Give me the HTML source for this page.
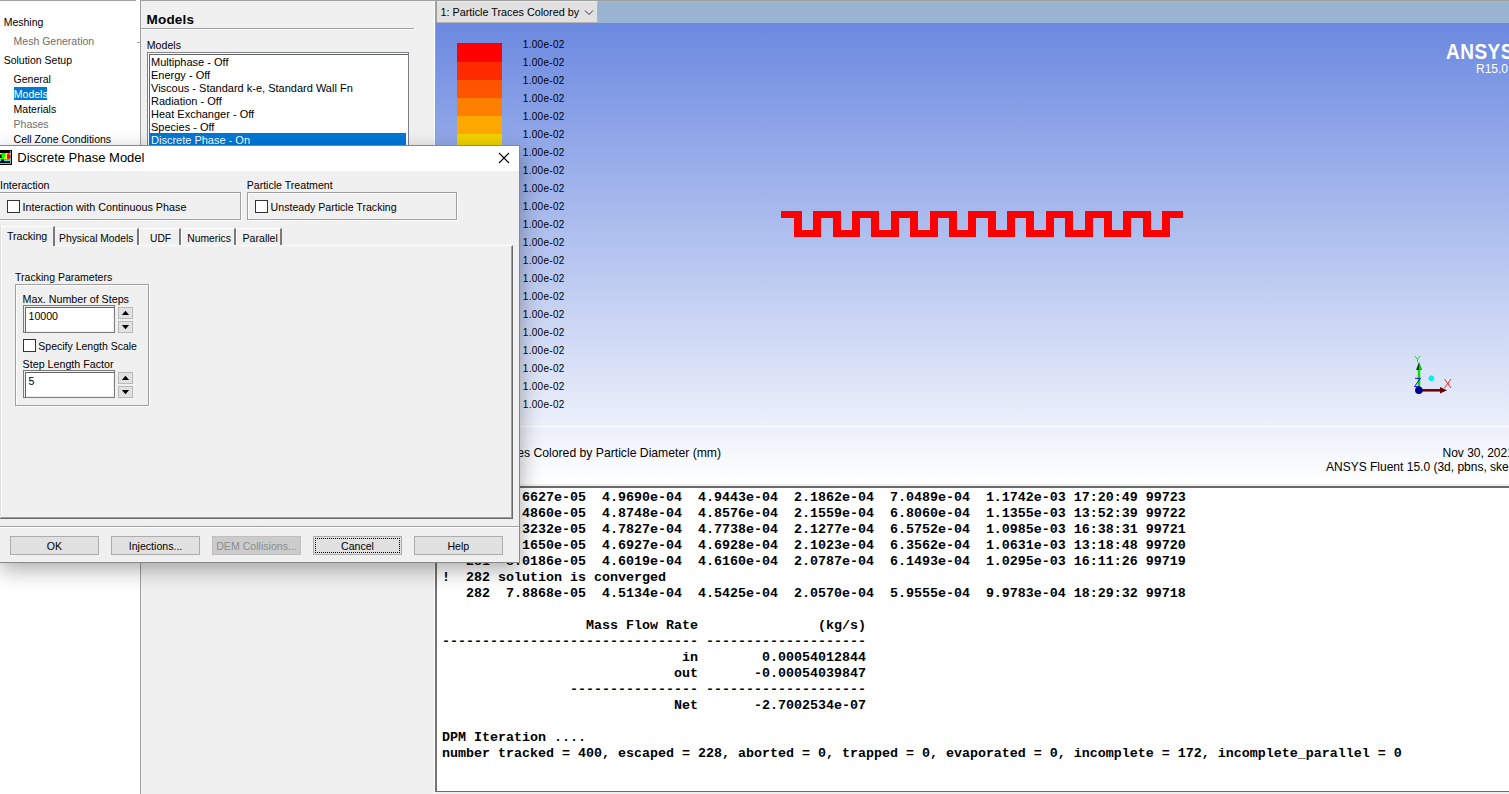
<!DOCTYPE html>
<html><head><meta charset="utf-8">
<style>
*{margin:0;padding:0;box-sizing:border-box}
html,body{width:1509px;height:794px;overflow:hidden;background:#f0f0f0;font-family:"Liberation Sans",sans-serif;font-size:11px;color:#000}
.a{position:absolute;white-space:pre}
#tree{position:absolute;left:0;top:0;width:140px;height:794px;background:#fff}
#tree .t{position:absolute;white-space:pre;font-size:10.5px;line-height:13px}
#page{position:absolute;left:140px;top:0;width:295px;height:794px;background:#f0f0f0;border-left:1px solid #a0a0a0;border-top:1px solid #a0a0a0}
#gfx{position:absolute;left:436px;top:0;width:1073px;height:487px;background:#f0f0f0}
#tabs{position:absolute;left:0;top:1px;width:1073px;height:22px;background:#99b4d1}
#view{position:absolute;left:0;top:23px;width:1073px;height:461px;background:linear-gradient(#6b89e0,#ffffff)}
#cons{position:absolute;left:435px;top:486px;width:1074px;height:306px;background:#fff;border-left:2px solid #737373;border-top:2px solid #6a6a6a;border-bottom:1px solid #696969;box-shadow:inset 0 0 0 0 #000}
#cons pre{position:absolute;left:5px;top:2px;font-family:"Liberation Mono",monospace;font-weight:bold;font-size:13.333px;line-height:16px;color:#000}
.lab{position:absolute;white-space:pre;left:86.8px;margin-top:1px;font-size:10px;line-height:14px;color:#000;letter-spacing:0.3px}
#dlg{position:absolute;left:-1px;top:145px;width:521px;height:418px;background:#f0f0f0;border:1px solid #888;box-shadow:1px 7px 20px rgba(0,0,0,.32)}
#title{position:absolute;left:0;top:0;width:519px;height:25px;background:#fff}
.grp{position:absolute;border:1px solid #a0a0a0;box-shadow:inset 1px 1px 0 #fff,1px 1px 0 #fff}
.cb{position:absolute;width:13px;height:13px;border:1px solid #333;background:#fff}
.btn{position:absolute;width:89px;height:19px;background:#e1e1e1;border:1px solid #adadad;text-align:center}
.entry{position:absolute;background:#fff;border:1px solid #7c7c7c;box-shadow:inset 1px 1px 0 #f0f0f0, inset 2px 2px 0 #646464, inset -1px -1px 0 #f0f0f0}
.spin{position:absolute;width:15px;height:12px;background:#e1e1e1;border:1px solid #b9b9b9}
.tab{position:absolute;border-left:1px solid #fff;border-top:1px solid #fff;border-right:2px solid #7a7a7a}
</style></head><body>
<div id="tree">
  <div style="position:absolute;left:0;top:0;width:136px;height:1px;background:#a0a0a0"></div>
  <div class="t" style="left:3.7px;top:15.8px">Meshing</div>
  <div class="t" style="left:13.6px;top:34.8px;color:#6d6d6d">Mesh Generation</div>
  <div class="t" style="left:3.7px;top:53.8px">Solution Setup</div>
  <div class="t" style="left:13.6px;top:72.8px">General</div>
  <div style="position:absolute;left:14px;top:87px;width:33px;height:13px;background:#0078d7"></div>
  <div class="t" style="left:13.8px;top:87.5px;color:#fff">Models</div>
  <div class="t" style="left:13.6px;top:102.8px">Materials</div>
  <div class="t" style="left:13.6px;top:117.8px;color:#6d6d6d">Phases</div>
  <div class="t" style="left:13.6px;top:132.8px">Cell Zone Conditions</div>
  <div style="position:absolute;left:137px;top:42px;width:3px;height:1px;background:#a0a0a0"></div>
</div>
<div id="page">
  <div class="a" style="left:5.5px;top:10.8px;font-weight:bold;font-size:13.5px;letter-spacing:0.2px">Models</div>
  <div style="position:absolute;left:0;top:27px;width:273px;height:1px;background:#a0a0a0"></div>
  <div style="position:absolute;left:0;top:28px;width:274px;height:1px;background:#fff"></div>
  <div class="a" style="left:5.8px;top:38px;font-size:10.6px">Models</div>
  <div style="position:absolute;left:6px;top:51px;width:262px;height:120px;background:#fff;border:1px solid #7f8289;box-shadow:inset 1px 1px 0 #fff,inset 2px 2px 0 #646464">
    <div class="a" style="left:3px;top:3px;line-height:13px">Multiphase - Off
Energy - Off
Viscous - Standard k-e, Standard Wall Fn
Radiation - Off
Heat Exchanger - Off
Species - Off
</div>
    <div class="a" style="left:2px;top:80px;width:256px;height:15px;background:#0078d7;color:#fff;padding-left:1px;padding-top:1px;line-height:13px">Discrete Phase - On</div>
  </div>
  <div style="position:absolute;left:293px;top:0;width:1px;height:794px;background:#fff"></div>
</div>
<div style="position:absolute;left:435px;top:0;width:1px;height:486px;background:#a0a0a0"></div>
<div id="gfx">
  <div id="tabs"></div>
  <div style="position:absolute;left:0;top:0;width:1073px;height:1px;background:#a0a0a0"></div>
  <div style="position:absolute;left:0;top:0;width:1px;height:23px;background:#a0a0a0"></div>
  <div style="position:absolute;left:1px;top:1px;width:161px;height:22px;background:#e1e1e1;border-top:1px solid #e9e9e9;border-right:1px solid #b4b4b4;border-bottom:1px solid #b4b4b4"></div>
  <div class="a" style="left:4.5px;top:6px;font-size:10.8px">1: Particle Traces Colored by</div>
  <svg style="position:absolute;left:148px;top:9px" width="10" height="7"><path d="M1 1.5 L5 5.5 L9 1.5" stroke="#333" stroke-width="1" fill="none"/></svg>
  <div id="view">
    
  </div>
</div>
<div id="legendwrap" style="position:absolute;left:0;top:0"><div style="position:absolute;left:457px;top:43px;width:45px;height:19px;background:#ff0000"></div><div style="position:absolute;left:457px;top:62px;width:45px;height:18px;background:#ff2b00"></div><div style="position:absolute;left:457px;top:80px;width:45px;height:18px;background:#ff5500"></div><div style="position:absolute;left:457px;top:98px;width:45px;height:18px;background:#ff7f00"></div><div style="position:absolute;left:457px;top:116px;width:45px;height:18px;background:#ffa800"></div><div style="position:absolute;left:457px;top:134px;width:45px;height:18px;background:#f2d200"></div><div style="position:absolute;left:457px;top:152px;width:45px;height:18px;background:#d7ff00"></div><div style="position:absolute;left:457px;top:170px;width:45px;height:18px;background:#aaff00"></div><div style="position:absolute;left:457px;top:188px;width:45px;height:18px;background:#55ff00"></div><div style="position:absolute;left:457px;top:206px;width:45px;height:18px;background:#00ff00"></div><div style="position:absolute;left:457px;top:224px;width:45px;height:18px;background:#00ff55"></div><div style="position:absolute;left:457px;top:242px;width:45px;height:18px;background:#00ffaa"></div><div style="position:absolute;left:457px;top:260px;width:45px;height:18px;background:#00ffff"></div><div style="position:absolute;left:457px;top:278px;width:45px;height:18px;background:#00aaff"></div><div style="position:absolute;left:457px;top:296px;width:45px;height:18px;background:#0055ff"></div><div style="position:absolute;left:457px;top:314px;width:45px;height:18px;background:#0000ff"></div><div style="position:absolute;left:457px;top:332px;width:45px;height:18px;background:#0000cc"></div><div style="position:absolute;left:457px;top:350px;width:45px;height:18px;background:#000099"></div><div style="position:absolute;left:457px;top:368px;width:45px;height:18px;background:#000066"></div><div style="position:absolute;left:457px;top:386px;width:45px;height:18px;background:#000033"></div></div>
<div style="position:absolute;left:436px;top:0"><div class="lab" style="top:37px">1.00e-02</div><div class="lab" style="top:55px">1.00e-02</div><div class="lab" style="top:73px">1.00e-02</div><div class="lab" style="top:91px">1.00e-02</div><div class="lab" style="top:109px">1.00e-02</div><div class="lab" style="top:127px">1.00e-02</div><div class="lab" style="top:145px">1.00e-02</div><div class="lab" style="top:163px">1.00e-02</div><div class="lab" style="top:181px">1.00e-02</div><div class="lab" style="top:199px">1.00e-02</div><div class="lab" style="top:217px">1.00e-02</div><div class="lab" style="top:235px">1.00e-02</div><div class="lab" style="top:253px">1.00e-02</div><div class="lab" style="top:271px">1.00e-02</div><div class="lab" style="top:289px">1.00e-02</div><div class="lab" style="top:307px">1.00e-02</div><div class="lab" style="top:325px">1.00e-02</div><div class="lab" style="top:343px">1.00e-02</div><div class="lab" style="top:361px">1.00e-02</div><div class="lab" style="top:379px">1.00e-02</div><div class="lab" style="top:397px">1.00e-02</div></div>
<svg style="position:absolute;left:0;top:0" width="1509" height="794">
  <g fill="#ff0000" shape-rendering="crispEdges"><rect x="794" y="211" width="8" height="26"/><rect x="813" y="211" width="8" height="26"/><rect x="833" y="211" width="8" height="26"/><rect x="852" y="211" width="8" height="26"/><rect x="871" y="211" width="8" height="26"/><rect x="891" y="211" width="8" height="26"/><rect x="910" y="211" width="8" height="26"/><rect x="930" y="211" width="8" height="26"/><rect x="949" y="211" width="8" height="26"/><rect x="968" y="211" width="8" height="26"/><rect x="988" y="211" width="8" height="26"/><rect x="1007" y="211" width="8" height="26"/><rect x="1026" y="211" width="8" height="26"/><rect x="1046" y="211" width="8" height="26"/><rect x="1065" y="211" width="8" height="26"/><rect x="1085" y="211" width="8" height="26"/><rect x="1104" y="211" width="8" height="26"/><rect x="1123" y="211" width="8" height="26"/><rect x="1143" y="211" width="8" height="26"/><rect x="1162" y="211" width="8" height="26"/><rect x="781" y="211" width="21" height="7"/><rect x="813" y="211" width="28" height="7"/><rect x="852" y="211" width="27" height="7"/><rect x="891" y="211" width="27" height="7"/><rect x="930" y="211" width="27" height="7"/><rect x="968" y="211" width="28" height="7"/><rect x="1007" y="211" width="27" height="7"/><rect x="1046" y="211" width="27" height="7"/><rect x="1085" y="211" width="27" height="7"/><rect x="1123" y="211" width="28" height="7"/><rect x="1162" y="211" width="21" height="7"/><rect x="794" y="230" width="27" height="7"/><rect x="833" y="230" width="27" height="7"/><rect x="871" y="230" width="28" height="7"/><rect x="910" y="230" width="28" height="7"/><rect x="949" y="230" width="27" height="7"/><rect x="988" y="230" width="27" height="7"/><rect x="1026" y="230" width="28" height="7"/><rect x="1065" y="230" width="28" height="7"/><rect x="1104" y="230" width="27" height="7"/><rect x="1143" y="230" width="27" height="7"/></g>
</svg>
<div class="a" style="left:1446px;top:42.7px;color:#fff;font-weight:bold;font-size:19px;letter-spacing:0.5px;transform:scaleY(1.18);transform-origin:0 100%;line-height:22px">ANSYS</div>
<div class="a" style="left:1476px;top:61.8px;color:#fff;font-size:12px">R15.0</div>
<div class="a" style="left:449.5px;top:446px;font-size:12.2px">Particle Traces Colored by Particle Diameter (mm)</div>
<div class="a" style="left:1442.5px;top:446px;font-size:12px">Nov 30, 2021</div>
<div class="a" style="left:1326px;top:460px;font-size:12px">ANSYS Fluent 15.0 (3d, pbns, ske</div>
<div style="position:absolute;left:436px;top:426px;width:1073px;height:1px;background:rgba(255,255,255,.9)"></div>
<svg style="position:absolute;left:1400px;top:350px" width="60" height="50">
 <g transform="translate(-1400,-350)">
 <line x1="1419" y1="390.3" x2="1419" y2="368" stroke="#00e000" stroke-width="2.5"/>
 <path d="M1416 370 L1419 362 L1422 370 Z" fill="#004d00"/>
 <path d="M1419 362 L1422 370 L1419 370 Z" fill="#00d000"/>
 <path d="M1415 356 L1417.5 359.5 L1420 356 M1417.5 359.5 L1417.5 362" stroke="#00e000" stroke-width="0.9" fill="none"/>
 <line x1="1419" y1="390.3" x2="1441" y2="390.3" stroke="#6a0000" stroke-width="2.5"/>
 <path d="M1440 387 L1447 390.3 L1440 393.5 Z" fill="#6a0000"/>
 <path d="M1444.5 379 L1451 388 M1451 379 L1444.5 388" stroke="#ff1010" stroke-width="0.9"/>
 <path d="M1415 378.3 H1420.5 L1414.5 386.6 H1420" stroke="#1010ff" stroke-width="1" fill="none"/>
 <circle cx="1418.9" cy="390.3" r="3.8" fill="#00007a"/>
 <circle cx="1418.2" cy="389.3" r="1.8" fill="#0000c0" opacity=".6"/>
 <circle cx="1431.4" cy="378.3" r="2.8" fill="#00f0f0"/>
 </g>
</svg>
<div id="cons"><pre>   277  8.6627e-05  4.9690e-04  4.9443e-04  2.1862e-04  7.0489e-04  1.1742e-03 17:20:49 99723
   278  8.4860e-05  4.8748e-04  4.8576e-04  2.1559e-04  6.8060e-04  1.1355e-03 13:52:39 99722
   279  8.3232e-05  4.7827e-04  4.7738e-04  2.1277e-04  6.5752e-04  1.0985e-03 16:38:31 99721
   280  8.1650e-05  4.6927e-04  4.6928e-04  2.1023e-04  6.3562e-04  1.0631e-03 13:18:48 99720
   281  8.0186e-05  4.6019e-04  4.6160e-04  2.0787e-04  6.1493e-04  1.0295e-03 16:11:26 99719
!  282 solution is converged
   282  7.8868e-05  4.5134e-04  4.5425e-04  2.0570e-04  5.9555e-04  9.9783e-04 18:29:32 99718

                  Mass Flow Rate               (kg/s)
-------------------------------- --------------------
                              in        0.00054012844
                             out       -0.00054039847
                ---------------- --------------------
                             Net       -2.7002534e-07

DPM Iteration ....
number tracked = 400, escaped = 228, aborted = 0, trapped = 0, evaporated = 0, incomplete = 172, incomplete_parallel = 0</pre></div>
<div id="dlg">
 <div style="position:absolute;left:0;top:-146px;width:1px;height:1px">
  <div style="position:absolute;left:0;top:146px;width:519px;height:25px;background:#fff"></div>
  <svg style="position:absolute;left:0;top:150px" width="13" height="16"><rect x="0" y="0" width="12" height="15" fill="#000"/><path d="M10.5 1 V13.5 H0" stroke="#a8a8a8" stroke-width="1" fill="none"/><rect x="0" y="3" width="10" height="6.5" fill="#ff0"/><polygon points="1.5,3 6,3 3.5,9.5 0.5,9.5" fill="#0f0"/><path d="M7 9 V4.5 Q7 3 9.5 3 V9 Z" fill="#f00"/><rect x="9.5" y="5" width="0.8" height="3" fill="#000"/><rect x="0" y="9.5" width="10" height="1.5" fill="#0ff"/><rect x="1" y="9.5" width="3" height="1.5" fill="#00007a"/><rect x="0" y="4.5" width="1.5" height="3.5" fill="#000"/></svg>
  <div class="a" style="left:17.3px;top:151.00px;font-size:13px;line-height:13px;">Discrete Phase Model</div>
  <svg style="position:absolute;left:498px;top:152px" width="12" height="12"><path d="M1 1 L11 11 M11 1 L1 11" stroke="#000" stroke-width="1.1"/></svg>
  <div class="a" style="left:0px;top:179.78px;font-size:10.6px;line-height:10.6px;">Interaction</div>
  <div class="a" style="left:246.7px;top:179.73px;font-size:10.6px;line-height:10.6px;">Particle Treatment</div>
  <div class="grp" style="left:-5px;top:192px;width:246px;height:28px"></div>
  <div class="grp" style="left:247px;top:192px;width:210px;height:28px"></div>
  <div class="cb" style="left:7px;top:200px"></div>
  <div class="cb" style="left:255px;top:200px"></div>
  <div class="a" style="left:22.6px;top:201.76px;font-size:10.8px;line-height:10.8px;">Interaction with Continuous Phase</div>
  <div class="a" style="left:270.6px;top:201.93px;font-size:10.6px;line-height:10.6px;">Unsteady Particle Tracking</div>
  <div style="position:absolute;left:0;top:245px;width:513px;height:274px;border-top:1px solid #fff;border-right:1px solid #696969;border-bottom:1px solid #696969;box-shadow:inset -1px -1px 0 #a0a0a0"></div><div style="position:absolute;left:0;top:226px;width:1px;height:292px;background:#e0e0e0"></div><div style="position:absolute;left:1px;top:227px;width:1px;height:290px;background:#fafafa"></div>
  <div class="tab" style="left:54px;top:228px;width:85px;height:17px"></div>
  <div class="tab" style="left:139px;top:228px;width:42px;height:17px"></div>
  <div class="tab" style="left:181px;top:228px;width:55px;height:17px"></div>
  <div class="tab" style="left:236px;top:228px;width:46px;height:17px"></div>
  <div style="position:absolute;left:0;top:226px;width:55px;height:20px;background:#f0f0f0;border-top:1px solid #fff;border-right:2px solid #7a7a7a"></div><div style="position:absolute;left:0;top:226px;width:1px;height:292px;background:#e0e0e0"></div><div style="position:absolute;left:1px;top:227px;width:1px;height:290px;background:#fafafa"></div>
  <div class="a" style="left:7px;top:230.93px;font-size:10.6px;line-height:10.6px;">Tracking</div>
  <div class="a" style="left:59.1px;top:234.18px;font-size:10.3px;line-height:10.3px;">Physical Models</div>
  <div class="a" style="left:150px;top:234.18px;font-size:10.3px;line-height:10.3px;">UDF</div>
  <div class="a" style="left:187.3px;top:234.18px;font-size:10.3px;line-height:10.3px;">Numerics</div>
  <div class="a" style="left:242.5px;top:232.93px;font-size:10.6px;line-height:10.6px;">Parallel</div>
  <div class="a" style="left:15.1px;top:272.31px;font-size:10.5px;line-height:10.5px;">Tracking Parameters</div>
  <div class="grp" style="left:15px;top:284px;width:134px;height:122px"></div>
  <div class="a" style="left:22.6px;top:293.64px;font-size:10.7px;line-height:10.7px;">Max. Number of Steps</div>
  <div class="entry" style="left:23px;top:305px;width:92px;height:28px"></div>
  <div class="a" style="left:28.5px;top:311.03px;font-size:10.6px;line-height:10.6px;">10000</div>
  <div class="spin up" style="left:118px;top:307px"><svg width="13" height="10" style="position:absolute;left:0;top:0"><path d="M2.9 6.9 L6.5 2.7 L10.1 6.9 Z" fill="#000"/></svg></div>
  <div class="spin dn" style="left:118px;top:321px"><svg width="13" height="10" style="position:absolute;left:0;top:0"><path d="M2.9 3.1 L6.5 7.3 L10.1 3.1 Z" fill="#000"/></svg></div>
  <div class="cb" style="left:23px;top:339px"></div>
  <div class="a" style="left:38.3px;top:340.81px;font-size:10.5px;line-height:10.5px;">Specify Length Scale</div>
  <div class="a" style="left:22.6px;top:358.84px;font-size:10.7px;line-height:10.7px;">Step Length Factor</div>
  <div class="entry" style="left:23px;top:370px;width:92px;height:28px"></div>
  <div class="a" style="left:28.5px;top:376.03px;font-size:10.6px;line-height:10.6px;">5</div>
  <div class="spin up" style="left:118px;top:372px"><svg width="13" height="10" style="position:absolute;left:0;top:0"><path d="M2.9 6.9 L6.5 2.7 L10.1 6.9 Z" fill="#000"/></svg></div>
  <div class="spin dn" style="left:118px;top:386px"><svg width="13" height="10" style="position:absolute;left:0;top:0"><path d="M2.9 3.1 L6.5 7.3 L10.1 3.1 Z" fill="#000"/></svg></div>
  <div style="position:absolute;left:0;top:526px;width:519px;height:1px;background:#a0a0a0"></div>
  <div style="position:absolute;left:0;top:527px;width:519px;height:1px;background:#fff"></div>
  <div class="btn" style="left:10px;top:536px;"><span style="position:absolute;left:0;right:0;top:4px;font-size:10.6px;line-height:10.6px">OK</span></div>
  <div class="btn" style="left:111px;top:536px;"><span style="position:absolute;left:0;right:0;top:4px;font-size:10.6px;line-height:10.6px">Injections...</span></div>
  <div class="btn" style="left:212px;top:536px;background:#cccccc;border-color:#bfbfbf;color:#8d8d8d;"><span style="position:absolute;left:0;right:0;top:4px;font-size:10.6px;line-height:10.6px">DEM Collisions...</span></div>
  <div class="btn" style="left:313px;top:536px;"><div style="position:absolute;left:1px;top:1px;right:1px;bottom:1px;border:1px dotted #000"></div><span style="position:absolute;left:0;right:0;top:4px;font-size:10.6px;line-height:10.6px">Cancel</span></div>
  <div class="btn" style="left:413.8px;top:536px;"><span style="position:absolute;left:0;right:0;top:4px;font-size:10.6px;line-height:10.6px">Help</span></div>
 </div>
</div>
</body></html>
